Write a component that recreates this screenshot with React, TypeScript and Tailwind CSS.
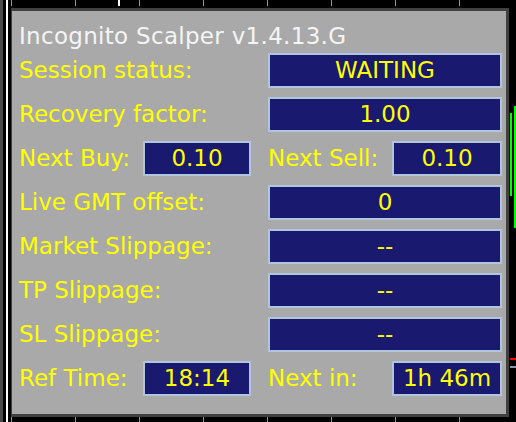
import React from "react";

const font = { fontFamily: '"DejaVu Sans", "Liberation Sans", sans-serif' };

function ValueBox({ value, className }: { value: string; className: string }) {
  return (
    <div
      className={`flex h-[35px] items-center justify-center border-2 border-[#b0c4de] bg-[#191970] text-[23px] leading-none text-[#ffff00] ${className}`}
    >
      {value}
    </div>
  );
}

function Label({ text, className = "" }: { text: string; className?: string }) {
  return <div className={`text-[23px] leading-none text-[#ffff00] ${className}`}>{text}</div>;
}

function FullRow({ label, value }: { label: string; value: string }) {
  return (
    <div className="flex items-center">
      <Label text={label} className="w-[249px]" />
      <ValueBox value={value} className="w-[234px]" />
    </div>
  );
}

function SplitRow({
  leftLabel,
  leftValue,
  rightLabel,
  rightValue,
}: {
  leftLabel: string;
  leftValue: string;
  rightLabel: string;
  rightValue: string;
}) {
  return (
    <div className="flex items-center">
      <Label text={leftLabel} className="w-[124px]" />
      <ValueBox value={leftValue} className="w-[108px]" />
      <Label text={rightLabel} className="ml-[17px] w-[124px]" />
      <ValueBox value={rightValue} className="w-[110px]" />
    </div>
  );
}

const ticks = [11, 75, 139, 203, 267, 331, 395, 459];

export default function App() {
  return (
    <div className="relative h-[422px] w-[516px] overflow-hidden bg-black" style={font}>
      {/* chart frame: left scale strip and time ticks */}
      <div className="absolute left-0 top-0 h-full w-[3px] bg-[#4a4a4a]" />
      <div className="absolute left-[6px] top-0 h-full w-[2px] bg-white" />
      {ticks.map((x) => (
        <React.Fragment key={x}>
          <div className="absolute top-0 h-[6px] w-px bg-[#8a96a8]" style={{ left: x }} />
          <div className="absolute bottom-0 h-[5px] w-px bg-[#8a96a8]" style={{ left: x }} />
        </React.Fragment>
      ))}
      <div className="absolute left-[118px] top-0 h-[6px] w-[2px] bg-white" />

      {/* price bars on the right edge */}
      <div className="absolute left-[510px] top-[113px] h-[83px] w-[2px] bg-[#00ff00]" />
      <div className="absolute left-[514px] top-[106px] h-[122px] w-[2px] bg-[#00ff00]" />
      <div className="absolute left-[510px] top-[358px] h-[2px] w-[6px] bg-[#ff0000]" />
      <div className="absolute left-[510px] top-[366px] h-[2px] w-[6px] bg-[#8a96a8]" />

      {/* info panel */}
      <div className="relative ml-[11px] mt-[8px] h-[409px] w-[498px] border-[3px] border-l-[1px] border-[#404040] bg-[#a9a9a9] pl-[7px]">
        <div className="mt-[14px] h-[28px] text-[23px] leading-none tracking-[0.3px] text-[#f5f5f5]">
          Incognito Scalper v1.4.13.G
        </div>
        <div className="flex flex-col gap-[9px]">
          <FullRow label="Session status:" value="WAITING" />
          <FullRow label="Recovery factor:" value="1.00" />
          <SplitRow leftLabel="Next Buy:" leftValue="0.10" rightLabel="Next Sell:" rightValue="0.10" />
          <FullRow label="Live GMT offset:" value="0" />
          <FullRow label="Market Slippage:" value="--" />
          <FullRow label="TP Slippage:" value="--" />
          <FullRow label="SL Slippage:" value="--" />
          <SplitRow leftLabel="Ref Time:" leftValue="18:14" rightLabel="Next in:" rightValue="1h 46m" />
        </div>
      </div>
    </div>
  );
}
